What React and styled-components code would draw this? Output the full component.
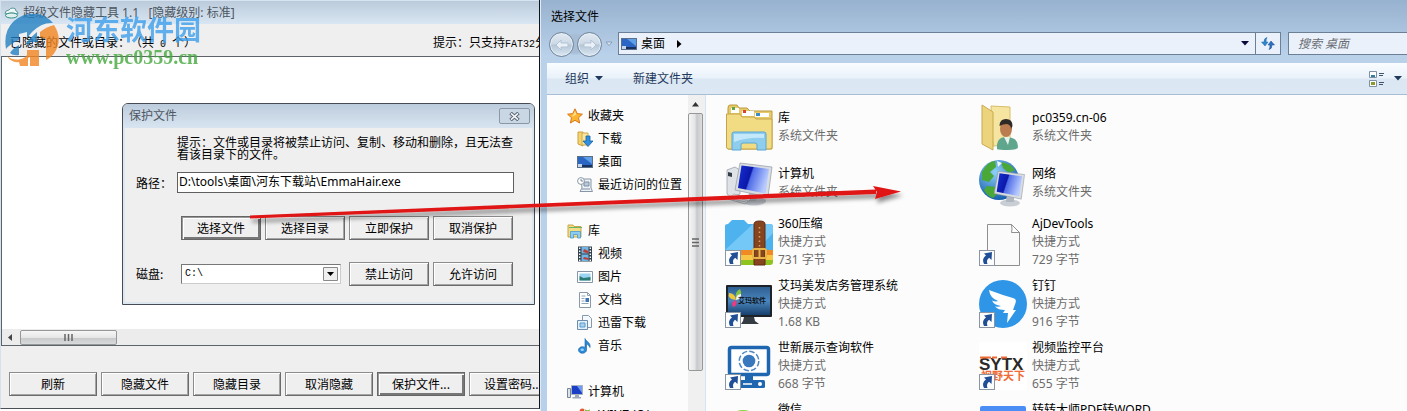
import React from "react";
import styled, { createGlobalStyle, css } from "styled-components";

const YAHEI = `"Noto Sans", "Noto Sans CJK SC", sans-serif`;
const SIMSUN = `"Noto Sans CJK SC", sans-serif`;

const GlobalStyle = createGlobalStyle`
  * { box-sizing: border-box; }
  body { margin: 0; background: #fff; overflow: hidden; }
  button, input, select { font: inherit; color: inherit; border-radius: 0; margin: 0; }
  svg { display: block; flex: none; }
`;

const Desktop = styled.main`
  position: relative;
  display: grid;
  grid-template-columns: minmax(0, 540fr) minmax(0, 867fr);
  height: 100vh;
  overflow: hidden;
  font: 12px/18px ${YAHEI};
  text-spacing-trim: space-all;
  color: #000;
`;

/* ---------- hiding tool window ---------- */

const ToolWindow = styled.section`
  position: relative;
  display: flex;
  flex-direction: column;
  min-width: 0;
  margin-bottom: 2px;
  overflow: hidden;
  background: #efefef;
  border-right: 1px solid #10151c;
  border-bottom: 1px solid #4b5056;
  border-left: 1px solid #d4e2f0;
  font-family: ${SIMSUN};
  white-space: nowrap;
`;

const ToolTitle = styled.header`
  display: flex;
  align-items: center;
  gap: 4px;
  height: 24px;
  padding-left: 3px;
  flex: none;
  border-top: 1px solid #d5e4f0;
  background: linear-gradient(#bccbdb, #d8e6f3);
  color: #4c5661;
  font-family: ${YAHEI};
  white-space: pre;
`;

const InfoRow = styled.div`
  display: grid;
  grid-template-columns: 423px auto;
  align-items: center;
  height: 32px;
  flex: none;
  padding: 4px 0 0 9px;
`;

const Latin = styled.span`
  font: 10px/12px "Liberation Mono", monospace;
`;

const FileList = styled.div`
  display: flex;
  flex-direction: column;
  justify-content: flex-end;
  flex: 1;
  background: #fff;
  border: 1px solid #5d636a;
  border-right: 0;
`;

const HScroll = styled.div`
  display: flex;
  align-items: center;
  gap: 7px;
  height: 16px;
  padding-left: 6px;
  background: #ececec;
`;

const HThumb = styled.div`
  display: grid;
  place-items: center;
  width: 97px;
  height: 15px;
  border: 1px solid #979797;
  border-radius: 2px;
  background: linear-gradient(#f6f6f6, #e6e6e6 50%, #c9cacb 55%, #d9dadb);
`;

const ActionBar = styled.footer`
  display: flex;
  gap: 4px;
  flex: none;
  padding: 26px 0 12px 8px;
`;

const ClassicButton = styled.button`
  flex: none;
  width: ${(p) => p.$width}px;
  height: 24px;
  padding: 0;
  background: #efefef;
  border: 1px solid;
  border-color: #8c8c8c #6b6b6b #6b6b6b #8c8c8c;
  box-shadow: inset 1px 1px #fff, inset -1px -1px #a5a5a5;
  line-height: 18px;
  ${(p) =>
    p.$focused &&
    css`
      border-color: #666;
      box-shadow: inset 1px 1px #999, inset 2px 2px #fff, inset -2px -2px #777;
    `}
`;

/* ---------- protect-file dialog ---------- */

const Dialog = styled.section`
  position: absolute;
  top: 103px;
  left: 121px;
  width: 413px;
  height: 202px;
  border: 1px solid #454c55;
  border-radius: 6px 6px 0 0;
  background: #efefef;
  box-shadow: inset 0 0 0 2px #dde7f0;
  overflow: hidden;
`;

const DialogTitle = styled.header`
  display: flex;
  align-items: center;
  justify-content: space-between;
  height: 24px;
  padding: 0 4px 0 6px;
  background: linear-gradient(#bdccdc, #d8e5f1);
  color: #4e5863;
  font-family: ${YAHEI};
`;

const CloseButton = styled.button`
  display: grid;
  place-items: center;
  width: 31px;
  height: 16px;
  padding: 0;
  border: 1px solid #8b97a6;
  border-radius: 2px;
  background: #c9d6e4;
`;

const DialogForm = styled.form`
  padding: 8px 20px 0 13px;
`;

const Hint = styled.p`
  margin: 0 0 12px 41px;
  line-height: 12px;
  white-space: normal;
  width: 340px;
`;

const Field = styled.div`
  display: flex;
  align-items: center;
  height: 21px;
`;

const FieldLabel = styled.label`
  flex: none;
  width: ${(p) => p.$width}px;
`;

const PathInput = styled.input`
  flex: 1;
  min-width: 0;
  height: 21px;
  padding: 0 1px 3px;
  border: 1px solid #5f5f5f;
  background: #fff;
  outline: 0;
  font-family: ${YAHEI};
`;

const ButtonRow = styled.div`
  display: flex;
  gap: 4px;
  padding: 23px 0 22px 45px;
`;

const DriveRow = styled.div`
  display: flex;
  align-items: center;
`;

const DriveBox = styled.div`
  display: grid;
  grid-template-columns: 1fr 15px;
  align-items: center;
  width: 160px;
  height: 20px;
  margin-right: 8px;
  padding: 1px 2px;
  background: #fff;
  border: 1px solid #777;
  border-right-color: #ccc;
  border-bottom-color: #ccc;
  svg { grid-area: 1 / 2; width: 15px; height: 14px; pointer-events: none; }
`;

const DriveSelect = styled.select`
  grid-area: 1 / 1 / 2 / 3;
  appearance: none;
  height: 16px;
  padding: 0 1px;
  border: 0;
  outline: 0;
  background: transparent;
  font: 10px/16px "Liberation Mono", monospace;
`;

const DriveActions = styled.div`
  display: flex;
  gap: 4px;
`;

/* ---------- open-file window ---------- */

const Explorer = styled.section`
  display: flex;
  flex-direction: column;
  min-width: 0;
  padding-left: 7px;
  overflow: hidden;
  background: linear-gradient(#97b2cf, #bad1ea 56px, #b8d0e9);
  box-shadow: inset 1px 0 #dfeaf5;
  white-space: nowrap;
`;

const ExplorerTitle = styled.header`
  height: 32px;
  flex: none;
  padding: 8px 4px 0;
`;

const NavRow = styled.div`
  display: flex;
  height: 31px;
  flex: none;
  gap: 7px;
`;

const NavHistory = styled.nav`
  display: flex;
  gap: 3px;
  width: 64px;
  padding-left: 2px;
  background: radial-gradient(ellipse at 28px 12px, #a6bdd5 0 16px, transparent 22px);
`;

const RoundButton = styled.button`
  display: grid;
  place-items: center;
  flex: none;
  width: 25px;
  height: 25px;
  padding: 0;
  border: 1px solid #6f8499;
  border-radius: 50%;
  background: linear-gradient(#e3ebf3, #cbd8e5 48%, #b4c6d7 52%, #dbe7f2);
  box-shadow: inset 0 0 0 1px #e6eef6;
`;

const GhostButton = styled.button`
  display: grid;
  place-items: center;
  flex: none;
  padding: 0;
  border: 0;
  background: transparent;
  width: ${(p) => p.$width || 8}px;
  height: 24px;
`;

const AddressBar = styled.div`
  display: flex;
  align-items: center;
  flex: 1;
  min-width: 0;
  height: 23px;
  padding-left: 2px;
  border: 1px solid #6b7f96;
  background: #eaf1fa;
`;

const Crumb = styled.a`
  display: flex;
  align-items: center;
  gap: 4px;
  margin-right: 12px;
  color: inherit;
  text-decoration: none;
`;

const Spacer = styled.span`
  flex: 1;
`;

const RefreshButton = styled.button`
  display: grid;
  place-items: center;
  width: 25px;
  height: 21px;
  padding: 0;
  border: 0;
  border-left: 1px solid #6b7f96;
  background: transparent;
`;

const SearchInput = styled.input`
  width: 119px;
  height: 23px;
  padding: 0 9px;
  border: 1px solid #6b7f96;
  border-right: 0;
  background: #eaf1fa;
  outline: 0;
  font-style: italic;
  &::placeholder { color: #6a6f76; opacity: 1; }
`;

const Toolbar = styled.div`
  display: flex;
  align-items: center;
  height: 32px;
  flex: none;
  padding: 0 5px 0 18px;
  gap: 30px;
  border-bottom: 1px solid #a9bdd3;
  background: linear-gradient(#fafdff, #e9f1fa 48%, #dce7f4 52%, #dde8f5);
  color: #1e395b;
`;

const ToolbarButton = styled.button`
  display: flex;
  align-items: center;
  gap: ${(p) => p.$gap || 6}px;
  padding: 0;
  border: 0;
  background: transparent;
`;

const Panes = styled.div`
  display: flex;
  flex: 1;
  min-height: 0;
  background: #fcfcfc;
`;

const Sidebar = styled.nav`
  flex: none;
  width: 141px;
  padding: 9px 0 0 20px;
  overflow: hidden;
`;

const Group = styled.ul`
  margin: 0 0 23px;
  padding: 0;
  list-style: none;
`;

const SideLink = styled.a`
  display: flex;
  align-items: center;
  gap: 5px;
  height: 23px;
  padding-left: ${(p) => (p.$nested ? 10 : 0)}px;
  color: #000;
  text-decoration: none;
`;

const VScroll = styled.div`
  display: flex;
  flex-direction: column;
  align-items: center;
  gap: 6px;
  flex: none;
  width: 18px;
  padding: 7px 2px 40px 0;
  background: #f0f0f0;
  border-right: 1px solid #d3e4f2;
`;

const VThumb = styled.div`
  display: grid;
  place-items: center;
  width: 15px;
  flex: 1;
  border: 1px solid #979797;
  border-radius: 2px;
  background: linear-gradient(90deg, #f5f5f5, #e4e5e6 45%, #c8c9cb 60%, #dcdddf);
`;

const Files = styled.ul`
  display: grid;
  grid-template-columns: 254px 254px;
  align-content: start;
  flex: 1;
  margin: 0;
  padding: 4px 0 0 19px;
  list-style: none;
  overflow: hidden;
`;

const FileItem = styled.li`
  display: flex;
  align-items: center;
  gap: 5px;
  padding: 4px 0;
`;

const FileText = styled.div`
  color: #6d6d6d;
  line-height: 18px;
`;

const FileName = styled.div`
  color: #000;
`;

/* ---------- overlays ---------- */

const Watermark = styled.div`
  position: absolute;
  top: 13px;
  left: 4px;
  display: flex;
  gap: 4px;
  opacity: 0.8;
  pointer-events: none;
`;

const WatermarkName = styled.div`
  color: #3d9fec;
  font: 700 27px/32px "Noto Sans CJK SC", sans-serif;
`;

const WatermarkUrl = styled.div`
  color: #43a83c;
  font: 700 20px/24px "Liberation Serif", serif;
`;

const ArrowOverlay = styled.svg`
  position: absolute;
  top: 180px;
  left: 240px;
  pointer-events: none;
`;

/* ---------- drawings ---------- */

const Caret = ({ color = "#1e395b" }) => (
  <svg width="8" height="5"><path d="M0 0h8L4 4.500z" fill={color} /></svg>
);

const Icon16 = ({ children }) => (
  <svg width="16" height="16" viewBox="0 0 16 16">{children}</svg>
);

const DesktopIcon = () => (
  <Icon16>
    <rect x="0.500" y="2.500" width="15" height="11" fill="#2b66c4" stroke="#5b6f88" />
    <path d="M6 3h9v7z" fill="#5f9fe8" />
    <path d="M1 11h14v2H1z" fill="#19315f" />
    <path d="M1 10h4v3H1z" fill="#c7d6e8" />
  </Icon16>
);

const sideIcons = {
  star: (
    <Icon16>
      <path d="M8 .8l2.200 4.800 5.200.6-3.900 3.500 1.100 5.300L8 12.300 3.400 15l1.100-5.300L.6 6.200l5.200-.6z" fill="#fcb52f" stroke="#d9761a" />
      <path d="M8 3l1.400 3.400L5 9z" fill="#ffe08a" />
    </Icon16>
  ),
  download: (
    <Icon16>
      <path d="M1 1h5v14l-5-2z" fill="#f4d46e" stroke="#c9a040" />
      <path d="M5 2h6v12H5z" fill="#f9e6a0" stroke="#cfaa4f" />
      <path d="M9 5h4v5h3l-5 5.500L6 10h3z" fill="#2f8fdc" stroke="#175f9f" strokeWidth=".8" />
    </Icon16>
  ),
  desktop: <DesktopIcon />,
  recent: (
    <Icon16>
      <path d="M4 2h10v9l1.500 3.500H3L5 11z" fill="#eef2f6" stroke="#8796a6" />
      <path d="M7 5h5v4H7zM5 12h8" fill="#b8cadd" stroke="#7d8fa3" />
      <circle cx="4" cy="4" r="3.400" fill="#fff" stroke="#8a97a5" />
      <path d="M4 2v2h2" fill="none" stroke="#56697d" strokeWidth=".8" />
    </Icon16>
  ),
  library: (
    <Icon16>
      <path d="M1 2h5l1 1.500h7V14H1z" fill="#f3dc86" stroke="#c8a64a" />
      <path d="M2 4.500h13" stroke="#68b568" />
      <path d="M3.500 15V8.500h10V15h-3v-3.500h-4V15z" fill="#8cccf0" stroke="#4b9bca" strokeWidth=".8" />
    </Icon16>
  ),
  video: (
    <Icon16>
      <path d="M1 .5h14v15H1z" fill="#33424f" />
      <path d="M4.500 1h7v6.500h-7zM4.500 8.500h7V15h-7z" fill="#6fb6e6" />
      <path d="M7 3l4.500 2v2.500L6 6zM7 11l4.500 1v2L6 13z" fill="#b8403a" />
      <path d="M2.700 1.500v14M13.300 1.500v14" stroke="#fff" strokeWidth="1.400" strokeDasharray="1.500 1.500" />
    </Icon16>
  ),
  picture: (
    <Icon16>
      <path d="M.5 2.500h15v11H.5z" fill="#fff" stroke="#8795a4" />
      <path d="M2.500 4.500h11v7h-11z" fill="#9bd3f3" />
      <path d="M2.500 7l4 2 7-1v3.500h-11z" fill="#287a73" />
    </Icon16>
  ),
  document: (
    <Icon16>
      <path d="M2.500.5h8l3 3v12h-11z" fill="#fff" stroke="#8b98a6" />
      <path d="M4.500 4h4M4.500 6.500h3M4.500 9h3M4.500 11.500h7M10.500.5v3h3" stroke="#8fa4ba" fill="none" />
      <path d="M8.500 6h3.500v4H8.500z" fill="#3b73b3" />
    </Icon16>
  ),
  thunder: (
    <Icon16>
      <path d="M5.500.5h6l3 3v9h-9z" fill="#f5f9fc" stroke="#8299b0" />
      <path d="M.5 5.500h10v9H.5z" fill="#e3f0fa" stroke="#6d8dac" />
      <path d="M3 8h5v4H3z" fill="#a9d2f0" stroke="#5d9ac9" />
    </Icon16>
  ),
  music: (
    <Icon16>
      <path d="M8 .5c1 3 6 4 5 9-1-2-2-3-3.500-3.200V12a4 3.300 0 1 1-1.500-2.600z" fill="#2b8bd8" stroke="#175f9f" strokeWidth=".6" />
      <ellipse cx="5.200" cy="11.800" rx="1.700" ry="1.200" fill="#9ed4fa" />
    </Icon16>
  ),
  computer: (
    <Icon16>
      <path d="M.5 4.500h3v9h-3z" fill="#dce3ea" stroke="#75869a" />
      <path d="M4.500 1.500h11v9h-11z" fill="#1b3fc4" stroke="#a6b3c2" />
      <path d="M10 2h5v7z" fill="#6f9bf0" />
      <path d="M8 11h4v2h2v1.500H5.500V13H8z" fill="#9ba9b8" />
    </Icon16>
  ),
  drive: (
    <Icon16>
      <path d="M3 2.500c2-1.500 3-1 4.500-.3L6.500 6C5 5 4 5 2 6z" fill="#e4572e" />
      <path d="M8.200 2.500c2 1 3 .8 4.800-.2L12 6c-1.500 1-3 .8-4.800.2z" fill="#7fba3c" />
      <path d="M1 10h14v4H1z" fill="#c8d0d8" stroke="#7c8894" />
    </Icon16>
  ),
};

const Shortcut = () => (
  <g>
    <rect x=".5" y="32.500" width="15" height="15" fill="#fdfdfd" stroke="#8a96a3" />
    <path d="M5 35.500L13 34l-.5 8-2.400-2.200C8 41.500 7.500 43.500 8.500 46H5c-2-4-.5-6.500 2-8.500z" fill="#214f96" />
  </g>
);

const Monitor = ({ id }) => (
  <g>
    <linearGradient id={id} x1="0" y1="0" x2="1" y2="0.300">
      <stop offset="0" stopColor="#1630d8" /><stop offset=".45" stopColor="#0c18a8" />
      <stop offset=".5" stopColor="#4f6ce8" /><stop offset="1" stopColor="#b8cbff" />
    </linearGradient>
    <path d="M15 4l32 4-4 30-33-7z" fill="#d9dde2" stroke="#9299a3" strokeWidth=".7" />
    <path d="M16.500 6.500L44 10l-3.500 24.500L13 29z" fill={`url(#${id})`} />
  </g>
);

const fileArt = {
  libraries: (
    <>
      <path d="M3 5q0-3 2-3h7l2 3h8l3 3h22v38H3z" fill="#e7cb6a" stroke="#bc9a3e" />
      <path d="M6 5h8v5H6zM17 8h12v5H17zM30 10h14v4H30z" fill="#fff" />
      <path d="M7 4h3v3H7z" fill="#5ea646" /><path d="M18 7h3v3h-3z" fill="#d9432f" /><path d="M31 10h4v3h-4z" fill="#3d8cc4" />
      <path d="M1.500 11H15l2 3h12l2 2h16v28q0 2-2 2H3.500q-2 0-2-2z" fill="#f2dc83" stroke="#c5a449" />
      <path d="M7 47V31q0-2 2-2h30q2 0 2 2v16h-9v-5q0-2-2-2H18q-2 0-2 2v5z" fill="#8fcdee" stroke="#5ba6d0" />
      <path d="M9 31h30v4q-15-1-30 4z" fill="#c3e8fa" />
    </>
  ),
  computer: (
    <>
      <path d="M2 11l8-3 5 3v24l-9 3-4-3z" fill="#dfe3e7" stroke="#9aa2ab" strokeWidth=".8" />
      <path d="M3 13l4 1v4l-4-1z" fill="#333d47" />
      <ellipse cx="29" cy="42" rx="12" ry="4.500" fill="#c9ced5" />
      <path d="M24 33l8 2-1 7h-8z" fill="#b4bac3" />
      <Monitor id="scr1" />
      <path d="M3 40l6-5 17 5-6 5z" fill="#f0f2f5" stroke="#a0a8b2" strokeWidth=".8" />
      <path d="M7 40l14 3M9 38l14 3.500" stroke="#bcc3cb" />
    </>
  ),
  zip: (
    <>
      <path d="M0 44v-4h48v4q0 3-3 3H3q-3 0-3-3z" fill="#8fc31f" />
      <path d="M0 37h48v5H0z" fill="#f6c644" /><path d="M0 32h48v5H0z" fill="#f08a24" />
      <path d="M0 8q0-2 3-2l4-4h12l4 4h22q3 0 3 3v23H0z" fill="#4db2ee" />
      <path d="M0 32L28 6h17q3 0 3 3v6L32 32z" fill="#74c8f7" />
      <path d="M29 6q0-3 5.500-3T40 6v41H29z" fill="#87451f" stroke="#5f2d12" />
      <path d="M34.500 9v22" stroke="#d9a45c" strokeWidth="1.500" strokeDasharray="1.500 3" />
      <rect x="28" y="31" width="13" height="9" rx="1.500" fill="none" stroke="#e8b347" strokeWidth="2" />
      <path d="M34.500 30v9" stroke="#e8b347" strokeWidth="2" />
      <Shortcut />
    </>
  ),
  salon: (
    <>
      <linearGradient id="salon" x1="0" y1="0" x2="0" y2="1"><stop offset="0" stopColor="#2f5f93" /><stop offset=".5" stopColor="#4a86bd" /><stop offset="1" stopColor="#173f6d" /></linearGradient>
      <rect x="1" y="5" width="46" height="32" rx="1" fill="#1d2329" />
      <rect x="3" y="7" width="42" height="28" fill="url(#salon)" />
      <path d="M11 20Q2 19 4 13q6 0 7 7z" fill="#f3c63d" /><path d="M11 20Q9 12 15 9q4 7-4 11z" fill="#84c340" />
      <path d="M11 20q-6 2-3 7 5-1 3-7z" fill="#e83b80" /><path d="M11 20q6-1 5-6-5 0-5 6z" fill="#f5f0f5" />
      <text x="13" y="23" fontSize="7" fontWeight="700" fill="#10171f" fontFamily="Noto Sans CJK SC, sans-serif">艾玛软件</text>
      <path d="M19 37h10l1 4 4 3H16l2-3z" fill="#343b43" />
      <Shortcut />
    </>
  ),
  query: (
    <>
      <rect x="4.500" y="5.500" width="39" height="27" rx="2" fill="#fff" stroke="#1f66b0" strokeWidth="3.500" />
      <circle cx="24" cy="19" r="6.300" fill="#3a78bd" />
      <circle cx="24" cy="19" r="9.800" fill="none" stroke="#4c86c4" strokeWidth="1.500" strokeDasharray="5.500 2.200" />
      <path d="M20 33h8v5h-8z" fill="#1f66b0" />
      <rect x="10" y="38" width="30" height="8" rx="1.500" fill="#1f66b0" />
      <path d="M18 42h9" stroke="#fff" strokeWidth="1.500" /><circle cx="35" cy="42" r="2" fill="#fff" />
      <Shortcut />
    </>
  ),
  wechat: (
    <>
      <ellipse cx="18" cy="20" rx="16" ry="14" fill="#83d53a" />
      <ellipse cx="33" cy="32" rx="13" ry="11" fill="#eee" />
    </>
  ),
  user: (
    <>
      <path d="M12 3l19 1v38l-17 1z" fill="#f5e5a1" stroke="#d8bd67" />
      <path d="M3 2l11 7v38L3 41z" fill="#ecd47c" stroke="#c9a951" />
      <path d="M18 46q-1-12 9-12 12 0 12 10 0 3-10 3-9 0-11-1z" fill="#5fa68c" />
      <path d="M25 34h6l-2 8z" fill="#e7f2ed" />
      <ellipse cx="27" cy="26" rx="6" ry="8" fill="#bb7d50" />
      <path d="M20.500 23q0-7 6.500-7t6.500 7l-1.500 3q0-4-4-5-4 0-7.500 2z" fill="#302a27" />
    </>
  ),
  network: (
    <>
      <radialGradient id="sea" cx=".4" cy=".3" r=".7"><stop offset="0" stopColor="#8fd0f8" /><stop offset="1" stopColor="#1860ae" /></radialGradient>
      <circle cx="20" cy="21" r="20" fill="url(#sea)" />
      <path d="M3 13q6-11 13-11l1 6-6 5 4 4-5 6-7-2zM8 27l9 1 3 5-6 6q-7-3-9-8zM22 3q9 1 14 8l-6 3-6-5z" fill="#49a838" />
      <path d="M18 2l5 2-4 4z" fill="#e9f6ff" />
      <ellipse cx="31" cy="44" rx="10" ry="3.500" fill="#c9ced5" />
      <path d="M28 35h7v8h-8z" fill="#b0b7c0" />
      <g transform="translate(7 9) scale(.82)"><Monitor id="scr2" /></g>
    </>
  ),
  page: (
    <>
      <path d="M8.500 6.500h24l8 8v33h-32z" fill="#fafafa" stroke="#8f8f8f" />
      <path d="M32.500 6.500q1 5 0 8h8z" fill="#fff" stroke="#8f8f8f" />
      <Shortcut />
    </>
  ),
  ding: (
    <>
      <circle cx="24" cy="24" r="24" fill="#2f95e6" />
      <path d="M10 10q13 5 24 8 4 1 2.500 5L34 30h3L28 43l1-10h-5l2-3q-7 0-10-3.500 4 .5 6-.5-7-1-9-5.500 4 1.500 6 .5-8-3-9-11z" fill="#fff" />
      <Shortcut />
    </>
  ),
  sytx: (
    <>
      <rect width="48" height="48" fill="#fff" />
      <text x="0" y="28" fontSize="17" fontWeight="700" fill="#2b2928" fontFamily="Liberation Sans, sans-serif">SYTX</text>
      <path d="M1 14.500h11v2H1zM13 14.500h5v2h-5zM22 14.500h6v2h-6z" fill="#ef6a35" />
      <text x="2" y="38" fontSize="11" fontWeight="700" fill="#ef6a35" fontFamily="Noto Sans CJK SC, sans-serif">视野天下</text>
      <Shortcut />
    </>
  ),
  pdf: <rect x="1" y="2" width="46" height="45" rx="2" fill="#4a8df5" />,
};

/* ---------- data ---------- */

const groups = [
  [["star", "收藏夹"], ["download", "下载"], ["desktop", "桌面"], ["recent", "最近访问的位置"]],
  [["library", "库"], ["video", "视频"], ["picture", "图片"], ["document", "文档"], ["thunder", "迅雷下载"], ["music", "音乐"]],
  [["computer", "计算机"], ["drive", "WIN7 (C:)"]],
];

const files = [
  ["libraries", "库", "系统文件夹"],
  ["user", "pc0359.cn-06", "系统文件夹"],
  ["computer", "计算机", "系统文件夹"],
  ["network", "网络", "系统文件夹"],
  ["zip", "360压缩", "快捷方式", "731 字节"],
  ["page", "AjDevTools", "快捷方式", "729 字节"],
  ["salon", "艾玛美发店务管理系统", "快捷方式", "1.68 KB"],
  ["ding", "钉钉", "快捷方式", "916 字节"],
  ["query", "世新展示查询软件", "快捷方式", "668 字节"],
  ["sytx", "视频监控平台", "快捷方式", "655 字节"],
  ["wechat", "微信", "快捷方式", "1.02 KB"],
  ["pdf", "转转大师PDF转WORD", "快捷方式", "1.10 KB"],
];

const actions = ["刷新", "隐藏文件", "隐藏目录", "取消隐藏", "保护文件...", "设置密码..."];
const protectActions = ["选择文件", "选择目录", "立即保护", "取消保护"];

function ProtectDialog() {
  return (
    <Dialog role="dialog" aria-label="保护文件">
      <DialogTitle>
        保护文件
        <CloseButton type="button" aria-label="关闭">
          <svg width="11" height="9" viewBox="0 0 11 9">
            <path d="M1.500 1L9.500 8M9.500 1L1.500 8" stroke="#59636f" strokeWidth="3.600" />
            <path d="M2 1.400L9 7.600M9 1.400L2 7.600" stroke="#f4f7fa" strokeWidth="1.600" />
          </svg>
        </CloseButton>
      </DialogTitle>
      <DialogForm onSubmit={(e) => e.preventDefault()}>
        <Hint>提示：文件或目录将被禁止访问、复制、移动和删除，且无法查看该目录下的文件。</Hint>
        <Field>
          <FieldLabel $width={41} htmlFor="path">路径：</FieldLabel>
          <PathInput id="path" type="text" defaultValue="D:\tools\桌面\河东下载站\EmmaHair.exe" />
        </Field>
        <ButtonRow>
          {protectActions.map((t, i) => (
            <ClassicButton key={t} type="button" $width={80} $focused={i === 0}>{t}</ClassicButton>
          ))}
        </ButtonRow>
        <DriveRow>
          <FieldLabel $width={45} htmlFor="drive">磁盘:</FieldLabel>
          <DriveBox>
            <DriveSelect id="drive" defaultValue="C"><option value="C">C:\</option></DriveSelect>
            <svg viewBox="0 0 15 14">
              <path d="M.5.5h14v13H.5z" fill="#efefef" stroke="#8a8a8a" />
              <path d="M4 5h7L7.500 9z" />
            </svg>
          </DriveBox>
          <DriveActions>
            <ClassicButton type="button" $width={80}>禁止访问</ClassicButton>
            <ClassicButton type="button" $width={80}>允许访问</ClassicButton>
          </DriveActions>
        </DriveRow>
      </DialogForm>
    </Dialog>
  );
}

function HideTool() {
  return (
    <ToolWindow>
      <ToolTitle>
        <svg width="15" height="12" viewBox="0 0 15 12">
          <path d="M1 7q0-4 4-4 1-2 4-2 3 0 3 3 2 0 2 3-6-2-13 0z" fill="#eef6f6" stroke="#5b9a9c" />
          <ellipse cx="7.500" cy="8.500" rx="6" ry="2.500" fill="#dff0ee" stroke="#318d86" />
        </svg>
        {"超级文件隐藏工具 1.1   [隐藏级别: 标准]"}
      </ToolTitle>
      <InfoRow>
        <span>已隐藏的文件或目录：（共<Latin> 0 </Latin>个）</span>
        <span>提示：只支持<Latin>FAT32</Latin>分区</span>
      </InfoRow>
      <FileList>
        <HScroll>
          <svg width="5" height="7"><path d="M4 0v7L0 3.500z" fill="#444" /></svg>
          <HThumb>
            <svg width="9" height="7"><path d="M1 0v7M4.500 0v7M8 0v7" stroke="#666" strokeWidth="1.500" /></svg>
          </HThumb>
        </HScroll>
      </FileList>
      <ActionBar>
        {actions.map((t) => (
          <ClassicButton key={t} type="button" $width={88} $focused={t === "保护文件..."}>{t}</ClassicButton>
        ))}
      </ActionBar>
      <ProtectDialog />
    </ToolWindow>
  );
}

function FilePicker() {
  return (
    <Explorer>
      <ExplorerTitle>选择文件</ExplorerTitle>
      <NavRow>
        <NavHistory aria-label="历史">
          <RoundButton type="button" aria-label="后退">
            <svg width="14" height="12" viewBox="0 0 14 12"><path d="M6 1L1 6l5 5V8h7V4H6z" fill="#e9f0f7" stroke="#b3c3d3" /></svg>
          </RoundButton>
          <RoundButton type="button" aria-label="前进">
            <svg width="14" height="12" viewBox="0 0 14 12"><path d="M8 1l5 5-5 5V8H1V4h7z" fill="#e9f0f7" stroke="#b3c3d3" /></svg>
          </RoundButton>
          <GhostButton type="button" aria-label="最近位置">
            <svg width="8" height="6"><path d="M1 1h6L4 4.500z" fill="#dce9f6" stroke="#7c93ab" strokeWidth=".8" /></svg>
          </GhostButton>
        </NavHistory>
        <AddressBar>
          <Crumb href="#desktop"><DesktopIcon />桌面</Crumb>
          <svg width="5" height="8"><path d="M0 0v8l4.500-4z" /></svg>
          <Spacer />
          <GhostButton type="button" aria-label="历史地址" $width={20}><Caret color="#0a0a3c" /></GhostButton>
          <RefreshButton type="button" aria-label="刷新">
            <svg width="14" height="13" viewBox="0 0 14 13">
              <path d="M6 .5Q3 1 3 5H.5L4 9l3-4H5q0-3 1-4.500z" fill="#2e86cf" stroke="#1f62a5" strokeWidth=".5" />
              <path d="M8 12.500q3-.5 3-4.500h2.500L10 4 7 8h2q0 3-1 4.500z" fill="#2e6fbf" stroke="#1c4f93" strokeWidth=".5" />
            </svg>
          </RefreshButton>
        </AddressBar>
        <SearchInput type="search" aria-label="搜索 桌面" placeholder="搜索 桌面" />
      </NavRow>
      <Toolbar>
        <ToolbarButton type="button">组织<Caret /></ToolbarButton>
        <ToolbarButton type="button">新建文件夹</ToolbarButton>
        <Spacer />
        <ToolbarButton type="button" aria-label="更改视图" $gap={9}>
          <svg width="16" height="16" viewBox="0 0 16 16">
            <path d="M.5.5h7v6h-7zM.5 9.500h7v6h-7z" fill="#fff" stroke="#7d90a5" />
            <path d="M2 4h4v2H2z" fill="#2f7c9c" /><path d="M2 11h4v3H2z" fill="#8a9a2b" />
            <path d="M10 2.500h5M10 4.500h4M10 11.500h5M10 13.500h4" stroke="#41566e" />
          </svg>
          <Caret />
        </ToolbarButton>
      </Toolbar>
      <Panes>
        <Sidebar aria-label="位置">
          {groups.map((group) => (
            <Group key={group[0][1]}>
              {group.map(([icon, label], i) => (
                <li key={label}>
                  <SideLink href={`#${icon}`} $nested={i > 0}>{sideIcons[icon]}{label}</SideLink>
                </li>
              ))}
            </Group>
          ))}
        </Sidebar>
        <VScroll>
          <svg width="7" height="5"><path d="M0 4.500h7L3.500 0z" fill="#333" /></svg>
          <VThumb>
            <svg width="7" height="9"><path d="M0 1h7M0 4.500h7M0 8h7" stroke="#666" strokeWidth="1.500" /></svg>
          </VThumb>
        </VScroll>
        <Files>
          {files.map(([art, name, ...lines]) => (
            <FileItem key={name}>
              <svg width="48" height="48" viewBox="0 0 48 48">{fileArt[art]}</svg>
              <FileText>
                <FileName>{name}</FileName>
                {lines.map((line) => <div key={line}>{line}</div>)}
              </FileText>
            </FileItem>
          ))}
        </Files>
      </Panes>
    </Explorer>
  );
}

export default function App() {
  return (
    <>
      <GlobalStyle />
      <Desktop>
        <HideTool />
        <FilePicker />
        <Watermark>
          <svg width="58" height="54" viewBox="0 0 58 54">
            <path d="M2 36Q-1 18 10 8 20-1 34 1q9 2 15 9Q38 9 28 19l-5 6v-6l-8 2v6Q6 31 2 36z" fill="#2380c2" />
            <path d="M6 40q3-5 9-8v10q-6 1-9-2z" fill="#2380c2" />
            <path d="M23 29q5-6 10-10v10h-6l-4 4z" fill="#2380c2" />
            <path d="M50 12q9 14 1 27-3 5-9 8V26l-6-2V19q6-5 14-7z" fill="#f28522" />
            <path d="M3 43q6 5 14 3 4-1 6-4v-5h12v16h-9V44l-2 1v8h-8l-1-4Q7 50 3 43z" fill="#f28522" />
          </svg>
          <div>
            <WatermarkName>河东软件园</WatermarkName>
            <WatermarkUrl>www.pc0359.cn</WatermarkUrl>
          </div>
        </Watermark>
        <ArrowOverlay width="680" height="60" viewBox="240 180 680 60" aria-hidden="true">
          <defs>
            <filter id="shade" x="-5%" y="-50%" width="110%" height="250%">
              <feDropShadow dx="2" dy="4" stdDeviation="2" floodColor="#000" floodOpacity=".45" />
            </filter>
          </defs>
          <g filter="url(#shade)" fill="#e01414">
            <path d="M250 215.500L876 189.500v4.500L250 218.500z" />
            <path d="M873 186l28 5.500-26 7.500 2-7z" />
          </g>
        </ArrowOverlay>
      </Desktop>
    </>
  );
}
